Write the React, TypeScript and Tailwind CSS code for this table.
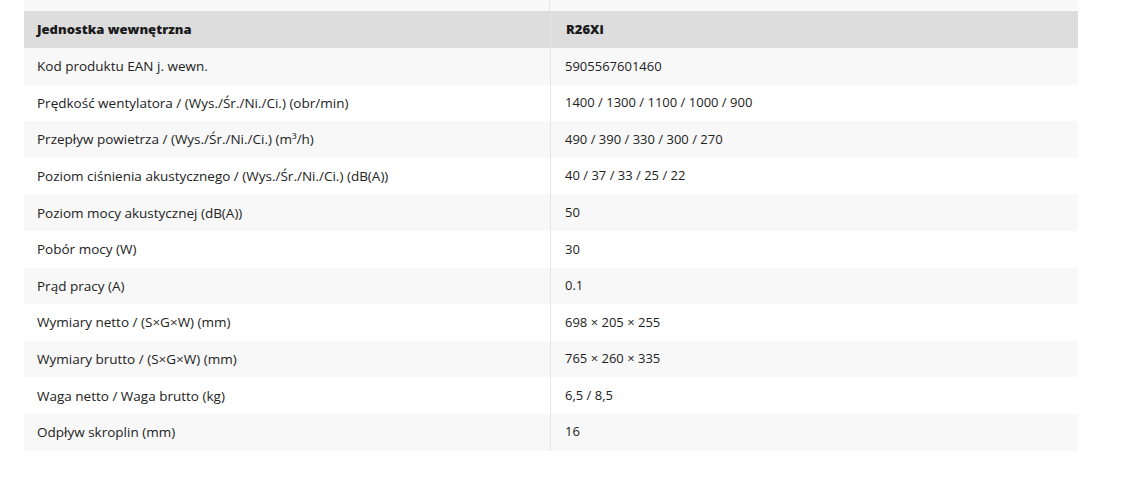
const rows: [string, string][] = [
  ['Kod produktu EAN j. wewn.', '5905567601460'],
  ['Prędkość wentylatora / (Wys./Śr./Ni./Ci.) (obr/min)', '1400 / 1300 / 1100 / 1000 / 900'],
  ['Przepływ powietrza / (Wys./Śr./Ni./Ci.) (m³/h)', '490 / 390 / 330 / 300 / 270'],
  ['Poziom ciśnienia akustycznego / (Wys./Śr./Ni./Ci.) (dB(A))', '40 / 37 / 33 / 25 / 22'],
  ['Poziom mocy akustycznej (dB(A))', '50'],
  ['Pobór mocy (W)', '30'],
  ['Prąd pracy (A)', '0.1'],
  ['Wymiary netto / (S×G×W) (mm)', '698 × 205 × 255'],
  ['Wymiary brutto / (S×G×W) (mm)', '765 × 260 × 335'],
  ['Waga netto / Waga brutto (kg)', '6,5 / 8,5'],
  ['Odpływ skroplin (mm)', '16'],
];

export default function App() {
  return (
    <div className="w-[1123px] h-[482px] bg-white overflow-hidden font-['Open_Sans',sans-serif] text-[#222]">
      <div className="ml-[24px] w-[1054px]">
        {/* tail of the previous table row */}
        <div className="flex h-[11px] bg-[#f9f9f9]">
          <div className="w-[526px] border-r border-[#e6e6e6]" />
          <div className="flex-1" />
        </div>

        <div className="flex h-[37px] items-center bg-[#dddddd] text-[13px] font-extrabold text-[#1a1a1a]">
          <div className="w-[526px] h-full flex items-center pl-[13px]">Jednostka wewnętrzna</div>
          <div className="flex-1 h-full flex items-center pl-[15px] border-l border-[#e6e6e6]">R26Xi</div>
        </div>

        {rows.map(([label, value], i) => (
          <div
            key={label}
            className={`flex h-[36.6px] ${i % 2 === 0 ? 'bg-[#f8f8f8]' : 'bg-white'}`}
          >
            <div className="w-[526px] flex items-center pl-[13px] text-[13.5px]">{label}</div>
            <div className="flex-1 flex items-center pl-[14px] border-l border-[#e6e6e6] text-[13px]">{value}</div>
          </div>
        ))}
      </div>
    </div>
  );
}
